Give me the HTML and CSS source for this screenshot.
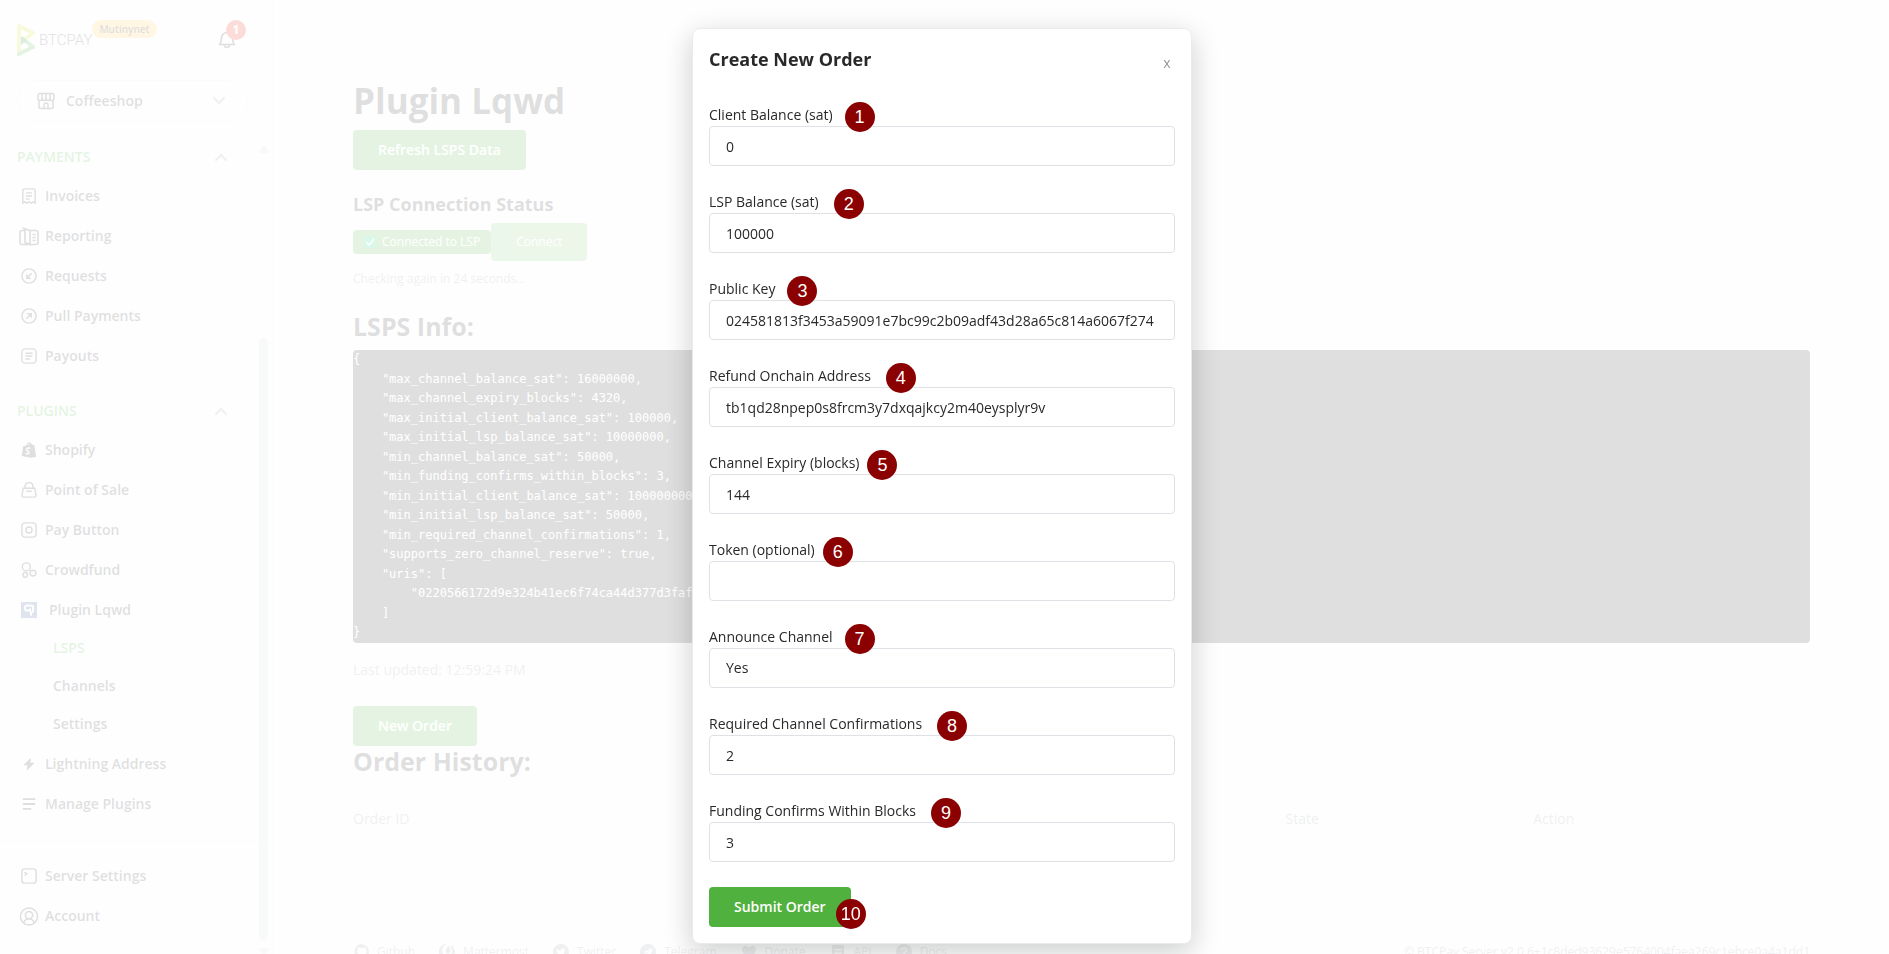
FILE: index.html
```html
<!DOCTYPE html>
<html lang="en">
<head>
<meta charset="utf-8">
<title>Plugin Lqwd</title>
<link rel="stylesheet" href="styles.css">
</head>
<body>
<div class="app">
  <aside class="sidebar">
    <header class="brand">
      <a class="brand-logo" href="#" aria-label="BTCPay Server">
        <svg width="19" height="34" viewBox="0 0 19 34" fill="none" stroke-linecap="round" stroke-linejoin="round" stroke-width="4">
          <path d="M2 31V3L16 10L6 18" stroke="#cedc21"/>
          <path d="M6 16L16 24L2 31" stroke="#51b13e"/>
          <path d="M4 13v9l6-4.500z" fill="#1e7a44"/>
        </svg>
        <span class="brand-name">BTCPAY</span>
      </a>
      <span class="net-badge">Mutinynet</span>
      <button class="bell" type="button" aria-label="Notifications">
        <svg width="18" height="20" viewBox="0 0 18 20" fill="none" stroke="currentColor" stroke-width="1.600" stroke-linejoin="round"><path d="M1.500 14.500C3 13 3.500 11 3.500 8a5.500 5.500 0 0 1 11 0c0 3 .5 5 2 6.500z"/><path d="M6.500 15a2.500 2.500 0 0 0 5 0"/></svg>
        <span class="bell-count">1</span>
      </button>
    </header>
    <button class="store" type="button">
      <svg width="18" height="18" viewBox="0 0 18 18" fill="none" stroke="currentColor" stroke-width="1.500" stroke-linejoin="round"><path d="M3 1.500h12a2 2 0 0 1 2 2V6.500a2 2 0 0 1-4 0 2 2 0 0 1-4 0 2 2 0 0 1-4 0 2 2 0 0 1-4 0V3.500a2 2 0 0 1 2-2zM5 2v4.500M9 2v4.500M13 2v4.500M2 8.500V15a1.500 1.500 0 0 0 1.500 1.500h11A1.500 1.500 0 0 0 16 15V8.500M7 16.500V13a2 2 0 0 1 4 0v3.500"/></svg>
      <span class="store-name">Coffeeshop</span>
      <svg class="chevron" width="14" height="8" viewBox="0 0 14 8" fill="none" stroke="currentColor" stroke-width="2" stroke-linecap="round"><path d="M2 1l5 5 5-5"/></svg>
    </button>
    <nav class="nav">
      <button class="nav-head" type="button">PAYMENTS <svg class="chevron" width="14" height="8" viewBox="0 0 14 8" fill="none" stroke="currentColor" stroke-width="2" stroke-linecap="round"><path d="M2 7l5-5 5 5"/></svg></button>
      <a class="nav-item" href="#"><svg viewBox="0 0 18 18"><path d="M2 17V3a2 2 0 0 1 2-2h10a2 2 0 0 1 2 2v14l-2.300-1.500L11.300 17 9 15.500 6.700 17l-2.400-1.500zM5.500 5.500h7M5.500 9h7M5.500 12.300h4"/></svg>Invoices</a>
      <a class="nav-item" href="#"><svg class="wide" viewBox="0 0 20 18"><path d="M6 3H3a2 2 0 0 0-2 2v10a2 2 0 0 0 2 2h14a2 2 0 0 0 2-2V5a2 2 0 0 0-2-2h-6M6 15V2.500L5 1l6 2v14l-5-2zM13.500 7h3M13.500 10h3M13.500 13h3"/></svg>Reporting</a>
      <a class="nav-item" href="#"><svg viewBox="0 0 18 18"><circle cx="9" cy="9" r="8"/><path d="M12 6l-5.500 5.500M6.500 7v4.500H11"/></svg>Requests</a>
      <a class="nav-item" href="#"><svg viewBox="0 0 18 18"><circle cx="9" cy="9" r="8"/><path d="M6 12l5.500-5.500M7 6.500h4.500V11"/></svg>Pull Payments</a>
      <a class="nav-item" href="#"><svg viewBox="0 0 18 18"><rect x="1" y="1" width="16" height="16" rx="4"/><path d="M5 6h8M5 9h8M5 12.300h5"/></svg>Payouts</a>
    </nav>
    <nav class="nav">
      <button class="nav-head" type="button">PLUGINS <svg class="chevron" width="14" height="8" viewBox="0 0 14 8" fill="none" stroke="currentColor" stroke-width="2" stroke-linecap="round"><path d="M2 7l5-5 5 5"/></svg></button>
      <a class="nav-item" href="#"><svg viewBox="0 0 18 18"><path fill="currentColor" stroke="none" d="M2.500 4.500L6 3.800C6.500 1.500 8 .3 9.500.3c1 0 1.700.7 2 1.700l1 .2 1 1.300 1.500.2L17 16.500 11.500 17.700.8 15.800zM7.300 3.500l2.300-.6c0-.6-.1-1-.4-1.400-.8.200-1.600.9-1.900 2z"/><path stroke="#f8f9fa" d="M10.500 7.200C8 6.200 6 7.300 6.200 8.800c.2 1.300 2.800 1.600 2.800 3.200 0 1.500-2 1.700-3.800.8"/></svg>Shopify</a>
      <a class="nav-item" href="#"><svg viewBox="0 0 18 18"><path d="M2.500 7h13l1.500 8a2 2 0 0 1-2 2H3a2 2 0 0 1-2-2zM4.500 7V5a4.500 4.500 0 0 1 9 0v2M6 10.500h6"/></svg>Point of Sale</a>
      <a class="nav-item" href="#"><svg viewBox="0 0 18 18"><rect x="1" y="1" width="16" height="16" rx="3.500"/><circle cx="9" cy="9" r="3.400"/></svg>Pay Button</a>
      <a class="nav-item" href="#"><svg viewBox="0 0 18 18"><circle cx="6" cy="5.500" r="4.500"/><circle cx="13.500" cy="12.500" r="3.300"/><circle cx="4.800" cy="14.500" r="2.600"/></svg>Crowdfund</a>
      <a class="nav-item lqwd" href="#"><svg viewBox="0 0 16 16"><path fill="#2b4a8b" stroke="none" d="M0 0h16v16H0z"/><path stroke="#fff" stroke-width="2" d="M9 6.500v2H6A2 2 0 0 1 4 6.500v-.8A2 2 0 0 1 6 3.500h4a2 2 0 0 1 2 2V8.500a2 2 0 0 1-2 2v3"/></svg>Plugin Lqwd</a>
      <a class="nav-sub active" href="#">LSPS</a>
      <a class="nav-sub" href="#">Channels</a>
      <a class="nav-sub" href="#">Settings</a>
      <a class="nav-item" href="#"><svg viewBox="0 0 18 18"><path fill="currentColor" stroke-width="1" d="M10.500 3L3.500 10h4.500l-1 5.500 7.500-7.500H10z"/></svg>Lightning Address</a>
      <a class="nav-item" href="#"><svg viewBox="0 0 18 18"><path stroke-width="2" d="M2 3.500h14M2 9h14M2 14.500h9.500"/></svg>Manage Plugins</a>
    </nav>
    <nav class="nav nav-bottom">
      <a class="nav-item" href="#"><svg viewBox="0 0 18 18"><rect x="1" y="1" width="16" height="16" rx="3"/><path d="M4 4.500L6.500 6.500 4 8.500"/></svg>Server Settings</a>
      <a class="nav-item" href="#"><svg class="wide" viewBox="0 0 20 20"><circle cx="10" cy="10" r="9"/><circle cx="10" cy="8.500" r="3.800"/><path d="M4.500 16.500c1-3 3-4.200 5.500-4.200s4.500 1.200 5.500 4.200"/></svg>Account</a>
    </nav>
    <div class="scroll" aria-hidden="true">
      <svg width="10" height="8" viewBox="0 0 10 8"><path d="M5 0l5 5.500L9 8H1L0 5.500z" fill="currentColor"/></svg>
      <span class="scroll-thumb"></span>
      <svg width="10" height="8" viewBox="0 0 10 8"><path d="M5 8l5-5.500L9 0H1L0 2.500z" fill="currentColor"/></svg>
    </div>
  </aside>

  <main class="main">
    <h1 class="title">Plugin Lqwd</h1>
    <button class="btn" type="button">Refresh LSPS Data</button>
    <h2 class="status-title">LSP Connection Status</h2>
    <div class="status">
      <span class="status-badge"><svg width="12" height="12" viewBox="0 0 12 12"><rect width="12" height="12" rx="1" fill="#00d26a"/><path d="M2.500 6.500l2.500 2.500 5-6" fill="none" stroke="#fff" stroke-width="1.500"/></svg>Connected to LSP</span>
      <button class="btn btn-connect" type="button" disabled>Connect</button>
    </div>
    <p class="checking">Checking again in 24 seconds...</p>
    <h2 class="section-title">LSPS Info:</h2>
    <pre class="code">{
    "max_channel_balance_sat": 16000000,
    "max_channel_expiry_blocks": 4320,
    "max_initial_client_balance_sat": 100000,
    "max_initial_lsp_balance_sat": 10000000,
    "min_channel_balance_sat": 50000,
    "min_funding_confirms_within_blocks": 3,
    "min_initial_client_balance_sat": 100000000,
    "min_initial_lsp_balance_sat": 50000,
    "min_required_channel_confirmations": 1,
    "supports_zero_channel_reserve": true,
    "uris": [
        "0220566172d9e324b41ec6f74ca44d377d3faf71"
    ]
}</pre>
    <p class="updated">Last updated: 12:59:24 PM</p>
    <button class="btn" type="button">New Order</button>
    <h2 class="section-title history">Order History:</h2>
    <table class="orders">
      <thead><tr><th class="col-id" scope="col">Order ID</th><th class="col-state" scope="col">State</th><th scope="col">Action</th></tr></thead>
    </table>
    <footer class="footer">
      <a href="#"><svg viewBox="0 0 16 16"><path fill-rule="evenodd" d="M8 0a8 8 0 0 1 3 15.400V13c0-1-.3-1.500-.7-1.800 2-.3 3.500-1.200 3.500-4 0-.9-.3-1.500-.8-2 .1-.6.1-1.300-.2-2-.8 0-1.500.4-2 .8-1.200-.3-2.400-.3-3.600 0-.5-.4-1.200-.8-2-.8-.3.700-.3 1.400-.2 2-.5.500-.8 1.100-.8 2 0 2.800 1.500 3.700 3.500 4-.4.300-.7.900-.7 1.800v2.400A8 8 0 0 1 8 0z"/></svg>Github</a>
      <a href="#"><svg viewBox="0 0 16 16"><path d="M11.500.9A8 8 0 1 1 7.500 0C4 1.500 3 5 3.400 7.500 4 11 7 13 10 12c3-1 4-5 2.500-8z"/><path d="M9.500 1.500c2 2.500 2.500 5 1.500 7-1 1.500-4 1.500-4.500-.5-.3-2 1.500-4 3-6.500z"/></svg>Mattermost</a>
      <a href="#"><svg viewBox="0 0 16 16"><path fill-rule="evenodd" d="M8 0a8 8 0 1 1 0 16A8 8 0 0 1 8 0zM4 4.500c-.6 1.200-.2 2.300.6 2.900l-.9-.2c0 1 .7 1.700 1.500 2l-.8.1c.3.700.9 1.100 1.700 1.200-.7.500-1.600.8-2.600.7 3.800 2.200 8.300-.3 8.200-4.800.4-.3.700-.6.900-1l-1 .2c.4-.2.600-.5.800-1l-1.200.5C9.700 3.700 7.700 4.800 8 6.600 6.400 6.500 5 5.800 4 4.500z"/></svg>Twitter</a>
      <a href="#"><svg viewBox="0 0 16 16"><path fill-rule="evenodd" d="M8 0a8 8 0 1 1 0 16A8 8 0 0 1 8 0zM3 8l2.500 1 1 3 1.600-1.500 2.500 1.800L12.500 4zm3.500.8L10.500 6 7.200 9.300 7 10.500z"/></svg>Telegram</a>
      <a href="#"><svg viewBox="0 0 16 16"><path d="M8 15C3 11 1 8.500 1 5.500 1 1.500 6 .5 8 4c2-3.500 7-2.500 7 1.500 0 3-2 5.500-7 9.500z"/></svg>Donate</a>
      <a href="#"><svg viewBox="0 0 16 16"><path fill-rule="evenodd" d="M3 1h10a1 1 0 0 1 1 1v12a1 1 0 0 1-1 1H3a1 1 0 0 1-1-1V2a1 1 0 0 1 1-1zm1.500 4v1.500h7V5zm0 3.500V10h7V8.500z"/></svg>API</a>
      <a href="#"><svg viewBox="0 0 16 16"><circle cx="8" cy="8" r="8"/><path fill="none" stroke="#f8f9fa" stroke-width="1.500" d="M5.500 6.500c0-3.500 5-3.200 5-.5C10.500 8 8 7.500 8 10M8 11.500V13"/></svg>Docs</a>
      <span class="version">© BTCPay Server v2.0.6+1c8ded93629e5764004faea269c1ebce0a4a1dd1</span>
    </footer>
  </main>
</div>

<div class="backdrop">
  <section class="dialog" role="dialog" aria-modal="true" aria-labelledby="dialog-title">
    <header class="dialog-head">
      <h2 class="dialog-title" id="dialog-title">Create New Order</h2>
      <button class="close" type="button" aria-label="Close">x</button>
    </header>
    <form class="form">
      <div class="field"><label for="client">Client Balance (sat)<span class="pin">1</span></label><input id="client" type="text" value="0"></div>
      <div class="field"><label for="lsp">LSP Balance (sat)<span class="pin pin-far">2</span></label><input id="lsp" type="text" value="100000"></div>
      <div class="field"><label for="key">Public Key<span class="pin">3</span></label><input id="key" type="text" value="024581813f3453a59091e7bc99c2b09adf43d28a65c814a6067f274"></div>
      <div class="field"><label for="refund">Refund Onchain Address<span class="pin pin-far">4</span></label><input id="refund" type="text" value="tb1qd28npep0s8frcm3y7dxqajkcy2m40eysplyr9v"></div>
      <div class="field"><label for="expiry">Channel Expiry (blocks)<span class="pin pin-near">5</span></label><input id="expiry" type="text" value="144"></div>
      <div class="field"><label for="token">Token (optional)<span class="pin pin-near">6</span></label><input id="token" type="text"></div>
      <div class="field"><label for="announce">Announce Channel<span class="pin">7</span></label><select id="announce"><option>Yes</option><option>No</option></select></div>
      <div class="field"><label for="confs">Required Channel Confirmations<span class="pin pin-far">8</span></label><input id="confs" type="text" value="2"></div>
      <div class="field"><label for="within">Funding Confirms Within Blocks<span class="pin pin-far">9</span></label><input id="within" type="text" value="3"></div>
      <div class="submit"><button class="btn" type="submit">Submit Order</button><span class="pin pin-submit">10</span></div>
    </form>
  </section>
</div>
</body>
</html>
```
FILE: styles.css
```css
* { box-sizing: border-box; }

body {
  margin: 0;
  height: 100vh;
  overflow: hidden;
  background: #f8f9fa;
  color: #292929;
  font: 400 14px/22px "Open Sans", "Noto Sans", sans-serif;
}

h1, h2, p, pre { margin: 0; }
a { color: inherit; text-decoration: none; }
button, input, select { font: inherit; color: inherit; }
button { border: 0; background: none; padding: 0; }
svg { flex: none; }

.app { display: flex; min-height: 100vh; }

/* Sidebar */
.sidebar {
  position: relative;
  flex: none;
  width: 273px;
  border-right: 1px solid #e9ecef;
  font-weight: 600;
}
.brand { display: flex; align-items: flex-start; height: 80px; padding: 20px 36px 0 17px; }
.brand-logo { display: flex; align-items: center; gap: 3px; padding-top: 3px; }
.brand-name { font: 300 15px/34px Roboto, sans-serif; }
.net-badge {
  padding: 0 7px;
  border-radius: 9px;
  background: #ffc043;
  font-size: 10px;
  line-height: 18px;
}
.bell { position: relative; margin: 10px 0 0 auto; height: 20px; }
.bell-count {
  position: absolute;
  left: 8px;
  bottom: 10px;
  width: 20px;
  border-radius: 10px;
  background: #e11900;
  color: #fff;
  font-size: 12px;
  font-weight: 700;
  line-height: 20px;
}
.store {
  display: flex;
  align-items: center;
  gap: 11px;
  width: 231px;
  height: 42px;
  margin-left: 17px;
  padding: 0 21px 0 19px;
  border: 1px solid #dee2e6;
  border-radius: 21px;
  font-weight: 600;
}
.store-name { flex: 1; text-align: left; }
.chevron { color: #8f979e; }
.nav { display: flex; flex-direction: column; padding: 15px 40px 0 17px; }
.nav-head {
  display: flex;
  align-items: center;
  justify-content: space-between;
  height: 39px;
  padding-right: 4px;
  color: #51b13e;
  font-weight: 600;
}
.nav-item { display: flex; align-items: center; gap: 8px; height: 40px; padding-left: 4px; }
.nav-item svg {
  width: 16px;
  height: 16px;
  fill: none;
  stroke: currentColor;
  stroke-width: 1.6;
}
.nav-item .wide { width: 20px; height: 19px; margin: 0 -2px; }
.lqwd { gap: 12px; }
.nav-sub { height: 38px; padding-left: 36px; line-height: 36px; }
.active { color: #51b13e; }
.nav-bottom { margin-top: 16px; border-top: 1px solid #e9ecef; }
.scroll {
  position: absolute;
  top: 145px;
  bottom: 7px;
  right: 3px;
  display: flex;
  flex-direction: column;
  color: #d0dedb;
}
.scroll-thumb { flex: 1; margin: 185px 0 8px; width: 9px; border-radius: 5px; background: currentColor; }

/* Page content */
.main { flex: 1; padding: 77px 79px 0 80px; }
.title { font-size: 35px; font-weight: 700; line-height: 48px; margin-bottom: 5px; }
.btn {
  height: 40px;
  padding: 0 25px;
  border-radius: 4px;
  background: #51b13e;
  color: #fff;
  font-weight: 600;
}
.status-title { margin-top: 20px; font-size: 18px; font-weight: 700; line-height: 28px; }
.status { display: flex; align-items: center; height: 38px; margin-top: 5px; }
.status-badge {
  display: flex;
  align-items: center;
  gap: 6px;
  height: 24px;
  padding: 0 11px;
  border-radius: 4px;
  background: #51b13e;
  color: #fff;
  font-size: 12px;
}
.btn-connect { height: 38px; font-size: 12px; font-weight: 400; opacity: .7; }
.checking { margin-top: 7px; color: #8f979e; font-size: 12px; }
.section-title { margin-top: 20px; font-size: 25px; font-weight: 700; line-height: 32px; }
.code {
  margin-top: 8px;
  border-radius: 4px;
  background: #292929;
  color: #fff;
  font: 12px/1.625 "DejaVu Sans Mono", monospace;
}
.updated { margin: 16px 0 25px; color: #8f979e; }
.history { margin-top: -1px; }
.orders { width: 100%; margin-top: 31px; border-collapse: collapse; color: #8f979e; table-layout: fixed; }
.orders th { padding: 0; font-weight: 400; text-align: left; }
.col-id { width: 64%; }
.col-state { width: 17%; }
.footer {
  display: flex;
  gap: 24px;
  margin-top: 111px;
  color: #8f979e;
  font-size: 12px;
}
.footer a { display: flex; align-items: center; gap: 8px; }
.footer svg { width: 16px; height: 16px; fill: currentColor; }
.version { margin-left: auto; }

/* Order dialog */
.backdrop {
  position: fixed;
  inset: 0;
  display: flex;
  justify-content: center;
  align-items: flex-start;
  padding: 28px 5px 0 0;
  background: rgba(255, 255, 255, .85);
}
.dialog {
  width: 100%;
  max-width: 500px;
  padding: 16px;
  border: 1px solid #e9ecef;
  border-radius: 8px;
  background: #fff;
  box-shadow: 0 8px 28px rgba(0, 0, 0, .2);
}
.dialog-head { display: flex; align-items: center; justify-content: space-between; height: 28px; }
.dialog-title { font-size: 18px; font-weight: 700; }
.close { width: 16px; padding-top: 8px; color: #8f979e; }
.form { margin-top: 31px; }
.field { display: flex; flex-direction: column; align-items: flex-start; margin-bottom: 25px; }
.field:last-of-type { margin-bottom: 24px; }
.field label { position: relative; }
.field input, .field select {
  width: 100%;
  height: 40px;
  padding: 0 16px;
  border: 1px solid #dee2e6;
  border-radius: 4px;
  background: #fff;
  appearance: none;
}
.pin {
  position: absolute;
  top: -2px;
  left: 100%;
  width: 30px;
  margin-left: 12px;
  border-radius: 15px;
  background: #8b0000;
  color: #fff;
  font: 18px/30px "Liberation Sans", sans-serif;
  text-align: center;
}
.pin-near { margin-left: 8px; }
.pin-far { margin-left: 15px; }
.submit { position: relative; width: max-content; display: flex; }
.pin-submit { top: 12px; margin-left: -15px; }
```
